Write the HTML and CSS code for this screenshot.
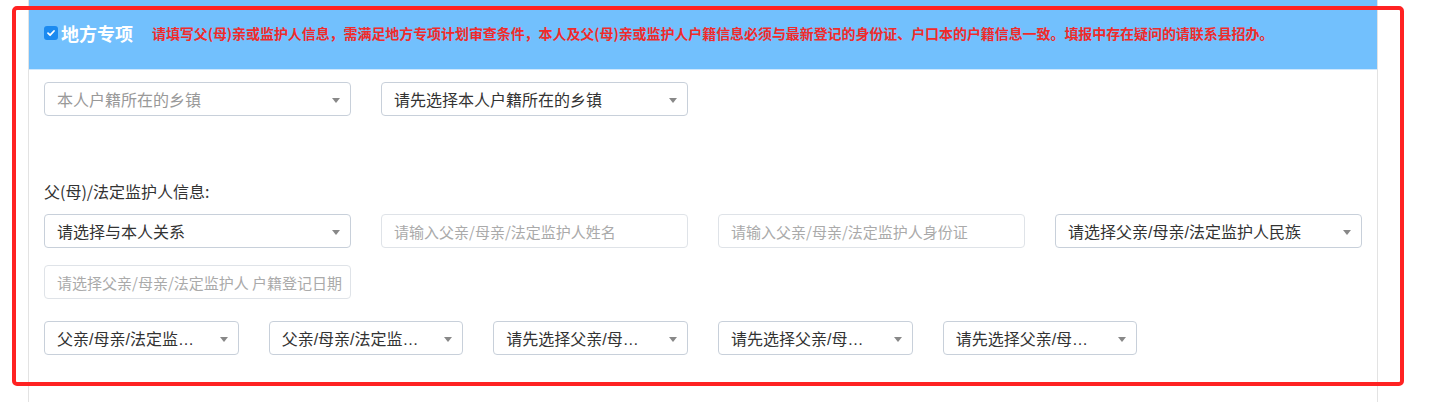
FILE: index.html
```html
<!DOCTYPE html>
<html>
<head>
    <meta charset="utf-8">
    <meta name="viewport" content="width=device-width, initial-scale=1.0">
    <link rel="stylesheet" href="styles.css">
</head>
<body>
    <div class="page">
        <div class="panel">
            <div class="panel-heading">
                <label class="check-title">
                    <span class="checkbox">
                        <svg width="10" height="10" viewBox="0 0 10 10"><path d="M2 5.2 L4.1 7.2 L8 3" fill="none" stroke="#fff" stroke-width="1.8" stroke-linecap="round" stroke-linejoin="round"/></svg>
                    </span>
                    <span class="title">地方专项</span>
                </label>
                <span class="notice">请填写父(母)亲或监护人信息，需满足地方专项计划审查条件，本人及父(母)亲或监护人户籍信息必须与最新登记的身份证、户口本的户籍信息一致。填报中存在疑问的请联系县招办。</span>
            </div>

            <div class="panel-body">
                <div class="row cols-4">
                    <div class="select empty"><span class="select-text">本人户籍所在的乡镇</span><i class="caret"></i></div>
                    <div class="select"><span class="select-text">请先选择本人户籍所在的乡镇</span><i class="caret"></i></div>
                </div>

                <div class="section-label">父(母)/法定监护人信息:</div>

                <div class="row cols-4">
                    <div class="select"><span class="select-text">请选择与本人关系</span><i class="caret"></i></div>
                    <input class="text-input" type="text" placeholder="请输入父亲/母亲/法定监护人姓名">
                    <input class="text-input" type="text" placeholder="请输入父亲/母亲/法定监护人身份证">
                    <div class="select"><span class="select-text">请选择父亲/母亲/法定监护人民族</span><i class="caret"></i></div>
                </div>

                <div class="row cols-4 row-date">
                    <input class="text-input" type="text" placeholder="请选择父亲/母亲/法定监护人 户籍登记日期">
                </div>

                <div class="row cols-6 row-address">
                    <div class="select short"><span class="select-text">父亲/母亲/法定监护人户籍所在省</span><i class="caret"></i></div>
                    <div class="select short"><span class="select-text">父亲/母亲/法定监护人户籍所在市</span><i class="caret"></i></div>
                    <div class="select short"><span class="select-text">请先选择父亲/母亲/法定监护人户籍所在市</span><i class="caret"></i></div>
                    <div class="select short"><span class="select-text">请先选择父亲/母亲/法定监护人户籍所在县</span><i class="caret"></i></div>
                    <div class="select short"><span class="select-text">请先选择父亲/母亲/法定监护人户籍所在乡镇</span><i class="caret"></i></div>
                </div>
            </div>
        </div>

        <!-- annotation frame drawn over the form -->
        <div class="highlight"></div>
    </div>
</body>
</html>
```

FILE: styles.css
```css
body {
    margin: 0;
    padding: 0;
    background-color: #fff;
    font-family: "Noto Sans CJK SC", "Noto Sans", sans-serif;
    color: #333;
}

.page {
    position: relative;
    padding-left: 28px;
    height: 402px;
    overflow: hidden;
}

.panel {
    width: 1348px;
    height: 420px;
    border-left: 1px solid #e3e3e3;
    border-right: 1px solid #e3e3e3;
    background-color: #fff;
}

.panel-heading {
    height: 70px;
    padding: 21px 15px 0 15px;
    box-sizing: border-box;
    background-color: #72c0fd;
    border-bottom: 1px solid #cfe8fd;
    display: flex;
    align-items: flex-start;
    white-space: nowrap;
}

.check-title {
    display: flex;
    align-items: center;
    height: 24px;
}

.checkbox {
    width: 14px;
    height: 14px;
    border-radius: 3px;
    background-color: #1b8af0;
    display: flex;
    align-items: center;
    justify-content: center;
    margin-right: 3px;
}

.title {
    color: #fff;
    font-size: 18px;
    font-weight: bold;
    line-height: 24px;
}

.notice {
    margin-left: 19px;
    color: #f02b2b;
    font-size: 14px;
    letter-spacing: -0.07px;
    font-weight: bold;
    line-height: 24px;
}

.panel-body {
    padding: 12px 15px 0 15px;
}

.row {
    display: grid;
    column-gap: 30px;
}

.cols-4 {
    grid-template-columns: repeat(4, 1fr);
}

.cols-6 {
    grid-template-columns: repeat(6, 1fr);
}

.row-date {
    margin-top: 17px;
}

.row-address {
    margin-top: 22px;
}

.section-label {
    margin-top: 65px;
    margin-bottom: 13px;
    font-size: 16px;
    line-height: 20px;
    color: #333;
}

.select {
    height: 34px;
    box-sizing: border-box;
    border: 1px solid #c8d0da;
    border-radius: 4px;
    padding: 0 30px 0 12px;
    display: flex;
    align-items: center;
    position: relative;
    min-width: 0;
}

.select.short {
    padding-right: 43px;
}

.select-text {
    font-family: "Liberation Sans", "Noto Sans CJK SC", sans-serif;
    font-size: 16px;
    color: #333;
    white-space: nowrap;
    overflow: hidden;
    text-overflow: ellipsis;
}

.select.empty .select-text {
    color: #999;
}

.caret {
    position: absolute;
    right: 10px;
    top: 15px;
    width: 0;
    height: 0;
    border-left: 4px solid transparent;
    border-right: 4px solid transparent;
    border-top: 5px solid #888;
}

.text-input {
    height: 34px;
    box-sizing: border-box;
    border: 1px solid #dfe3e8;
    border-radius: 4px;
    padding: 0 4px 0 12px;
    font-family: "Noto Sans CJK SC", "Noto Sans", sans-serif;
    font-size: 15px;
    color: #333;
    min-width: 0;
    width: 100%;
    outline: none;
}

.text-input::placeholder {
    color: #aaa;
}

.highlight {
    position: absolute;
    left: 12px;
    top: 6px;
    width: 1392px;
    height: 380px;
    box-sizing: border-box;
    border: 4px solid #ff2222;
    border-radius: 5px;
    pointer-events: none;
}
```
